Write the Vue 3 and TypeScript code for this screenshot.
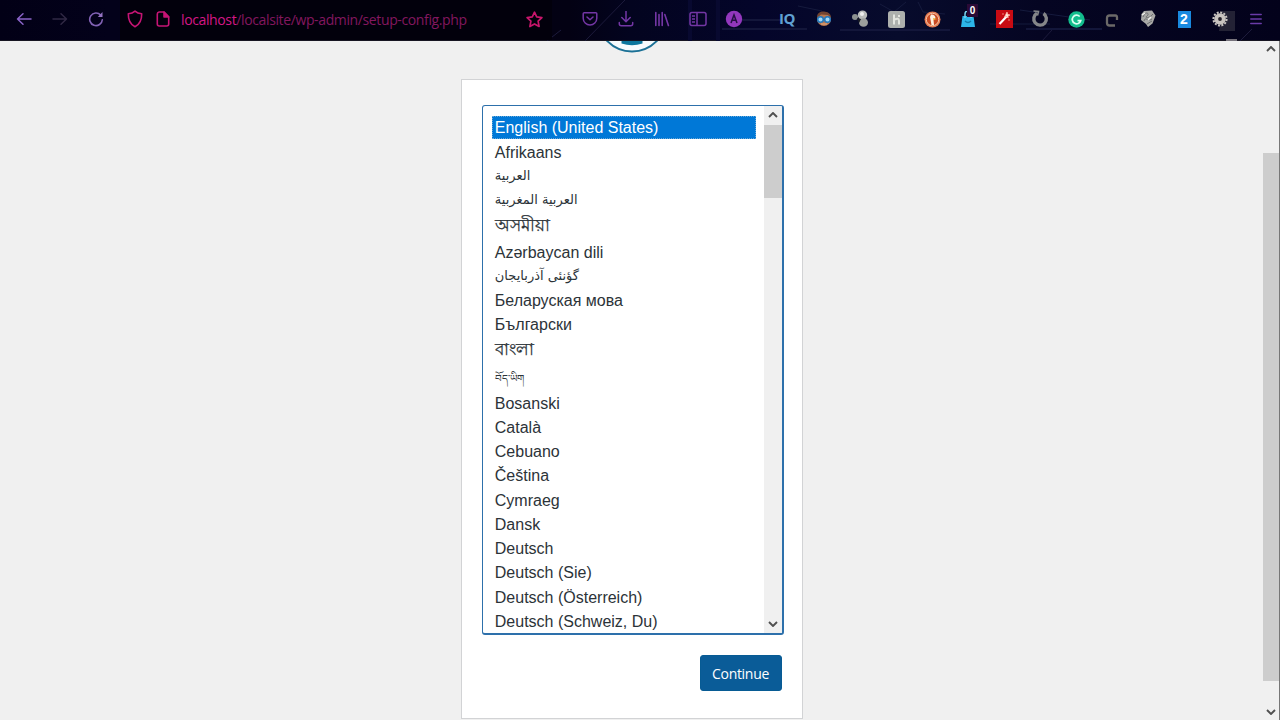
<script setup lang="ts">
interface Language {
  name: string
  script?: string
}

const languages: Language[] = [
  { name: 'English (United States)' },
  { name: 'Afrikaans' },
  { name: 'العربية', script: 'arabic' },
  { name: 'العربية المغربية', script: 'arabic' },
  { name: 'অসমীয়া', script: 'bengali' },
  { name: 'Azərbaycan dili' },
  { name: 'گؤنئی آذربایجان', script: 'arabic' },
  { name: 'Беларуская мова' },
  { name: 'Български' },
  { name: 'বাংলা', script: 'bengali' },
  { name: 'བོད་ཡིག', script: 'tibetan' },
  { name: 'Bosanski' },
  { name: 'Català' },
  { name: 'Cebuano' },
  { name: 'Čeština' },
  { name: 'Cymraeg' },
  { name: 'Dansk' },
  { name: 'Deutsch' },
  { name: 'Deutsch (Sie)' },
  { name: 'Deutsch (Österreich)' },
  { name: 'Deutsch (Schweiz, Du)' },
]
</script>

<template>
  <div class="window">
    <header class="toolbar">
      <svg class="backdrop" width="1280" height="41" viewBox="0 0 1280 41" aria-hidden="true">
        <g fill="none" stroke="#1d1b3c" stroke-width="1">
          <path d="M585 41 625 0M547 41l14-11M1042 41l10-11M1240 41l12-12" />
          <path d="M742 20h40M722 29h85M840 30h110M1026 29h76" stroke-width="2" stroke="#13163a" />
          <path d="M690 0v41M718 0v41" stroke="#080930" stroke-width="4" />
          <path d="M880 4l14 8 12-10M918 2l5 10 22 2M798 6l24 5M1020 10l70 10M990 24h60" stroke="#151a3d" />
        </g>
        <path d="M1222 11h13v20h-16z" fill="#232235" />
        <path d="M1226 39h11v2h-11z" fill="#77737c" />
      </svg>

      <nav class="history">
        <span class="cell"><svg width="16" height="16" viewBox="0 0 16 16" fill="none" stroke="#8a63c8" stroke-width="1.5" stroke-linecap="round" stroke-linejoin="round"><path d="M15 8H1.5M7 2.7 1.5 8 7 13.3" /></svg></span>
        <span class="cell"><svg width="16" height="16" viewBox="0 0 16 16" fill="none" stroke="#302844" stroke-width="1.5" stroke-linecap="round" stroke-linejoin="round"><path d="M1 8h13.5M9 2.7 14.5 8 9 13.3" /></svg></span>
        <span class="cell"><svg width="16" height="16" viewBox="0 0 16 16" fill="none" stroke="#8262b5" stroke-width="1.6" stroke-linecap="round"><path d="M12.7 4.1A6.3 6.3 0 1 0 14.3 8.7" /><path d="M14.5 1v5H9.8z" fill="#9472c2" stroke="none" /></svg></span>
      </nav>

      <div class="address">
        <span class="shield"><svg width="16" height="18" viewBox="0 0 16 18" fill="none" stroke="#c61475" stroke-width="1.6" stroke-linejoin="round"><path d="M8 1.2C6 3 3.7 3.6 1.3 3.8 1.2 9.8 3.1 14.4 8 16.8c4.9-2.4 6.8-7 6.7-13C12.3 3.6 10 3 8 1.2z" /></svg></span>
        <span class="page"><svg width="14" height="16" viewBox="0 0 14 16" fill="none" stroke="#c61475" stroke-width="1.6" stroke-linejoin="round"><path d="M3 1h5l4.7 4.7V13a2 2 0 0 1-2 2H3.300a2 2 0 0 1-2-2V3A2 2 0 0 1 3 1z" /><path d="M8 1v5h4.700z" fill="#c61475" /></svg></span>
        <span class="url"><b>localhost</b>/localsite/wp-admin/setup-config.php</span>
        <span class="star"><svg width="17" height="17" viewBox="0 0 17 17" fill="none" stroke="#c7156b" stroke-width="1.7" stroke-linejoin="round"><path d="m8.500 1.200 2.200 4.700 5.200.7-3.800 3.500 1 5.400-4.600-2.600-4.600 2.600 1-5.400L1.100 6.600l5.200-.7z" /></svg></span>
      </div>

      <nav class="tools">
        <span class="cell"><svg width="16" height="16" viewBox="0 0 16 16" fill="none" stroke="#7436a5" stroke-width="1.5" stroke-linecap="round" stroke-linejoin="round"><path d="M2.200 1.700h11.600q1 0 1 1v4.500a6.800 6.800 0 0 1-13.600 0V2.700q0-1 1-1zM5 6l3 2.700L11 6" /></svg></span>
        <span class="cell"><svg width="16" height="16" viewBox="0 0 16 16" fill="none" stroke="#7436a5" stroke-width="1.500" stroke-linecap="round" stroke-linejoin="round"><path d="M8 0v10.500M3.800 6.500 8 10.700l4.200-4.200M1.300 11.500v1.200q0 2 2 2h9.400q2 0 2-2v-1.200" /></svg></span>
        <span class="cell"><svg width="16" height="16" viewBox="0 0 16 16" fill="none" stroke="#7436a5" stroke-width="1.600" stroke-linecap="round"><path d="M1.800 1.500v13M5 3.500v11M8.200 1.500v13M10.800 3.500l3.600 11" /></svg></span>
        <span class="cell"><svg width="18" height="16" viewBox="0 0 18 16" fill="none" stroke="#7436a5" stroke-width="1.500"><rect x="1" y="1.500" width="16" height="13" rx="2" /><path d="M8 1.500v13M3 5h3M3 8h3M3 11h3" /></svg></span>
        <span class="cell"><svg width="18" height="18" viewBox="0 0 18 18"><circle cx="9" cy="9" r="8.200" fill="#9237bd" /><path d="m6 13 3-8 3 8M7.200 10.300h3.600" fill="none" stroke="#251044" stroke-width="1.500" /></svg></span>
        <span class="cell iq">IQ</span>
        <span class="cell"><svg width="16" height="16" viewBox="0 0 16 16"><circle cx="8" cy="8" r="7" fill="#b97850" /><path d="M1 7C.500 2 5 .300 8 .600s7 1.400 7 6.400L12 4 5 3.500z" fill="#744531" /><g fill="#a5d9f5" stroke="#2278bd" stroke-width="1.500"><circle cx="4.500" cy="8.500" r="2.800" /><circle cx="11.500" cy="8.500" r="2.800" /></g><path d="M5 13h6" stroke="#e2aa81" /></svg></span>
        <span class="cell"><svg width="18" height="18" viewBox="0 0 18 18"><ellipse cx="11.500" cy="5" rx="4.700" ry="4.500" fill="#b9bcba" /><ellipse cx="12.500" cy="12.500" rx="4.500" ry="4.300" fill="#9c9f9c" /><circle cx="4" cy="7" r="3" fill="#8c918f" /><path d="m6 8 4 1-2 4z" fill="#191c24" /><circle cx="11" cy="4" r="2" fill="#eee" /></svg></span>
        <span class="cell"><svg width="17" height="17" viewBox="0 0 17 17"><rect width="17" height="17" rx="2.500" fill="#adb0ad" /><path d="M6 3.500v10M6 9q5-3 5 1v3.500M11 4v2" fill="none" stroke="#e3e5df" stroke-width="2" /></svg></span>
        <span class="cell"><svg width="17" height="17" viewBox="0 0 17 17"><circle cx="8.500" cy="8.500" r="8" fill="#e67c54" /><circle cx="8.500" cy="8.500" r="6.200" fill="#c94a24" stroke="#f4c2a1" /><path d="M7 3.500q4-.500 4.500 3.500L9.500 9l.500 5H7.500L6 6z" fill="#fff0df" /><path d="m9 7 4 1-3.500 1z" fill="#edb42f" /></svg></span>
        <span class="cell bag"><svg width="14" height="17" viewBox="0 0 14 17"><path d="M1.500 5h11L14 16H0z" fill="#2cb5e8" /><path d="M4 7V3a3 3 0 0 1 6 0v4" fill="none" stroke="#78d1ed" stroke-width="1.500" /><path d="M4 10q3 3 6 0" fill="none" stroke="#137ba8" stroke-width="1.500" /></svg><i>0</i></span>
        <span class="cell"><svg width="17" height="18" viewBox="0 0 17 18"><path d="M0 0h17v18H0z" fill="#c80b13" /><path d="m3.500 14 7-7.500" stroke="#fff" stroke-width="2.200" /><path d="m11 2 .700 2.300L14 5l-2 1 .200 2-1.700-1.500-2 .500L9.500 5zM6 4h2M13 9v2" fill="#ffe8dc" stroke="#ffbcaa" stroke-width=".700" /></svg></span>
        <span class="cell"><svg width="18" height="18" viewBox="0 0 18 18" fill="none" stroke="#858689" stroke-width="3.400"><path d="M6 3.300a6.300 6.300 0 1 0 6.500.200" /><path d="m2.500 1 5 .500-1 4" stroke-width="1.600" /></svg></span>
        <span class="cell"><svg width="17" height="17" viewBox="0 0 17 17"><circle cx="8.500" cy="8.500" r="8.200" fill="#12bd8d" /><path d="M11.700 5.500a4.300 4.300 0 1 0 1 4.200H9.500" fill="none" stroke="#dbfff3" stroke-width="1.700" /></svg></span>
        <span class="cell low"><svg width="14" height="14" viewBox="0 0 14 14" fill="none" stroke="#6b6968" stroke-width="2.300"><path d="M12 7V4.500Q12 2.500 10.500 2.500h-6Q2 2.500 2 5v5Q2 12.500 4.500 12.500H10" /></svg></span>
        <span class="cell"><svg width="16" height="18" viewBox="0 0 16 18"><path d="m4 1 8-.500 3.500 5-3 8L8 17l-2-3-5-4 .500-6z" fill="#a9a9a7" /><path d="M3 7c3-7 7-3 4-1s2 3 6-2M4 11c1-5 4 1 8-2M7 14l5-3" fill="none" stroke="#6c6e70" stroke-width="1" /><path d="m2 5 3-2m3 7 3-3" stroke="#f0f0ec" stroke-width="1.500" /></svg></span>
        <span class="cell"><span class="two">2</span></span>
        <span class="cell"><svg width="16" height="16" viewBox="0 0 16 16"><circle cx="8" cy="8" r="5.800" fill="#c8c3bf" /><circle cx="8" cy="8" r="6.600" fill="none" stroke="#c8c4c0" stroke-width="2" stroke-dasharray="2 1.450" /><circle cx="8" cy="8" r="1.900" fill="#25212a" /></svg></span>
        <span class="cell"><svg width="12" height="12" viewBox="0 0 12 12" stroke="#6a3ba8" stroke-width="1.500" stroke-linecap="round"><path d="M.800 1.500h10.400M.800 6h10.400M.800 10.500h10.400" /></svg></span>
      </nav>
    </header>

    <div class="viewport">
      <main class="content">
        <div class="logo">
          <svg width="68" height="12" viewBox="0 0 68 12"><circle cx="35" cy="-24" r="34.500" fill="#f7fbfd" stroke="#1c7196" stroke-width="2" /><path d="M24.500 0h21v2.500Q35 6 24.500 2.500z" fill="#0c769d" /></svg>
        </div>
        <form class="card" @submit.prevent>
          <div class="listbox">
            <ul class="options">
              <li v-for="(language, index) in languages" :key="language.name" class="option" :class="[language.script, { selected: index === 0 }]"><span>{{ language.name }}</span></li>
            </ul>
            <div class="scroll">
              <svg width="10" height="6" viewBox="0 0 10 6"><path d="m1 5 4-4 4 4" /></svg>
              <div class="thumb"></div>
              <svg class="down" width="10" height="6" viewBox="0 0 10 6"><path d="m1 1 4 4 4-4" /></svg>
            </div>
          </div>
          <button class="continue">Continue</button>
        </form>
      </main>
      <aside class="page-scroll">
        <svg width="10" height="6" viewBox="0 0 10 6"><path d="m1 5 4-4 4 4" /></svg>
        <div class="page-thumb"></div>
        <svg class="down" width="10" height="6" viewBox="0 0 10 6"><path d="m1 1 4 4 4-4" /></svg>
      </aside>
    </div>
  </div>
</template>

<style>
body { margin: 0; overflow: hidden; }
</style>

<style scoped>
* { box-sizing: border-box; }
.window { width: 1280px; height: 720px; display: flex; flex-direction: column; overflow: hidden; background: #f0f0f0; font-family: "Liberation Sans", "DejaVu Sans", sans-serif; }
.toolbar { position: relative; flex: 0 0 41px; display: flex; align-items: flex-start; padding-left: 6px; background: linear-gradient(90deg, #020016 0, #03011a 110px, #030113 570px, #03041f 630px, #04052a 760px, #070b2c 900px, #050522 1040px, #03021b 1280px); border-bottom: 1px solid #171522; }
.backdrop { position: absolute; inset: 0; }
.history, .tools, .address { position: relative; display: flex; height: 38px; align-items: center; }
.cell { width: 36px; height: 38px; display: flex; align-items: center; justify-content: center; flex: none; }
.address { width: 432px; margin-left: 6px; height: 40px; padding-bottom: 2px; background: #02000c; }
.shield { width: 29px; display: flex; justify-content: center; }
.page { width: 28px; display: flex; justify-content: center; }
.shield svg, .page svg, .star svg { display: block; }
.url { width: 345px; margin-left: 4px; color: #83175f; font: 14px/20px "Open Sans", sans-serif; letter-spacing: -.375px; padding-top: 1px; white-space: nowrap; }
.url b { font-weight: 400; color: #d41786; }
.star { display: flex; }
.tools { margin-left: 20px; width: 700px; }
.iq { margin-left: 18px; color: #60a1d3; font: 700 15px/20px "Open Sans", sans-serif; letter-spacing: -.5px; padding-bottom: 2px; padding-right: 2px; }
.bag { position: relative; }
.bag i { position: absolute; left: 17px; top: 4px; width: 11px; height: 13px; background: #2a0a36; color: #fff; font: 700 10px/13px "Liberation Sans", sans-serif; text-align: center; }
.low { padding-top: 2px; }
.two { width: 13px; height: 17px; background: #1989df; color: #fff; font: 700 14px/17px "Liberation Sans", sans-serif; text-align: center; }
.viewport { flex: 1; display: flex; min-height: 0; }
.content { width: 1262px; display: flex; flex-direction: column; align-items: center; }
.logo { height: 38px; flex: none; }
.logo svg { display: block; }
.card { width: 342px; margin-left: 1px; height: 640px; flex: none; padding: 25px 18px 0 20px; border: 1px solid #d2d3d5; background: #fff; display: flex; flex-direction: column; align-items: flex-end; }
.listbox { width: 302px; height: 530px; flex: none; display: flex; border: 2px solid #2d70ab; border-top-width: 1px; border-left-width: 1px; border-radius: 3px; background: #fff; overflow: hidden; }
.options { list-style: none; margin: 0; padding: 10px 8px 0 9px; flex: 1; min-width: 0; }
.option { height: 24.250px; padding-left: 3.300px; display: flex; align-items: center; color: #2c3338; font-size: 16px; line-height: 24px; white-space: nowrap; }
.option span { position: relative; top: .4px; }
.option.selected { height: 23px; margin-bottom: 1.250px; color: #fff; background: #0078d7; outline: 1px dotted #68a9d8; outline-offset: -1px; }
.option.arabic { height: 24.100px; font-family: "DejaVu Sans", sans-serif; font-size: 13px; }
.option.arabic span { top: -.6px; }
.option.bengali { height: 27.400px; font-size: 16.800px; -webkit-text-stroke: .25px #2c3338; }
.option.bengali span { top: -.6px; }
.option.tibetan { height: 26.800px; font-size: 10.300px; }
.option.tibetan span { top: 1px; }
.scroll { width: 18px; background: #f0f0f0; display: flex; flex-direction: column; align-items: center; padding: 6px 0; }
.thumb { width: 18px; height: 73px; margin-top: 7px; background: #cdcdcd; flex: none; }
.scroll svg, .page-scroll svg { fill: none; stroke: #505050; stroke-width: 1.900; flex: none; }
.down { margin-top: auto; }
.continue { width: 82px; height: 36px; margin: 20px 2px 0 0; padding: 1px 0 0; border: 1px solid #075b94; border-radius: 3px; background: #0a5c98; color: #fff; font: 14px/33px "Open Sans", sans-serif; letter-spacing: -.3px; flex: none; }
.page-scroll { width: 18px; border-right: 1px solid #777; display: flex; flex-direction: column; align-items: center; padding: 5px 0 5px; }
.page-thumb { width: 16px; align-self: flex-end; height: 528px; margin-top: 101px; background: #cdcdcd; flex: none; }
</style>
